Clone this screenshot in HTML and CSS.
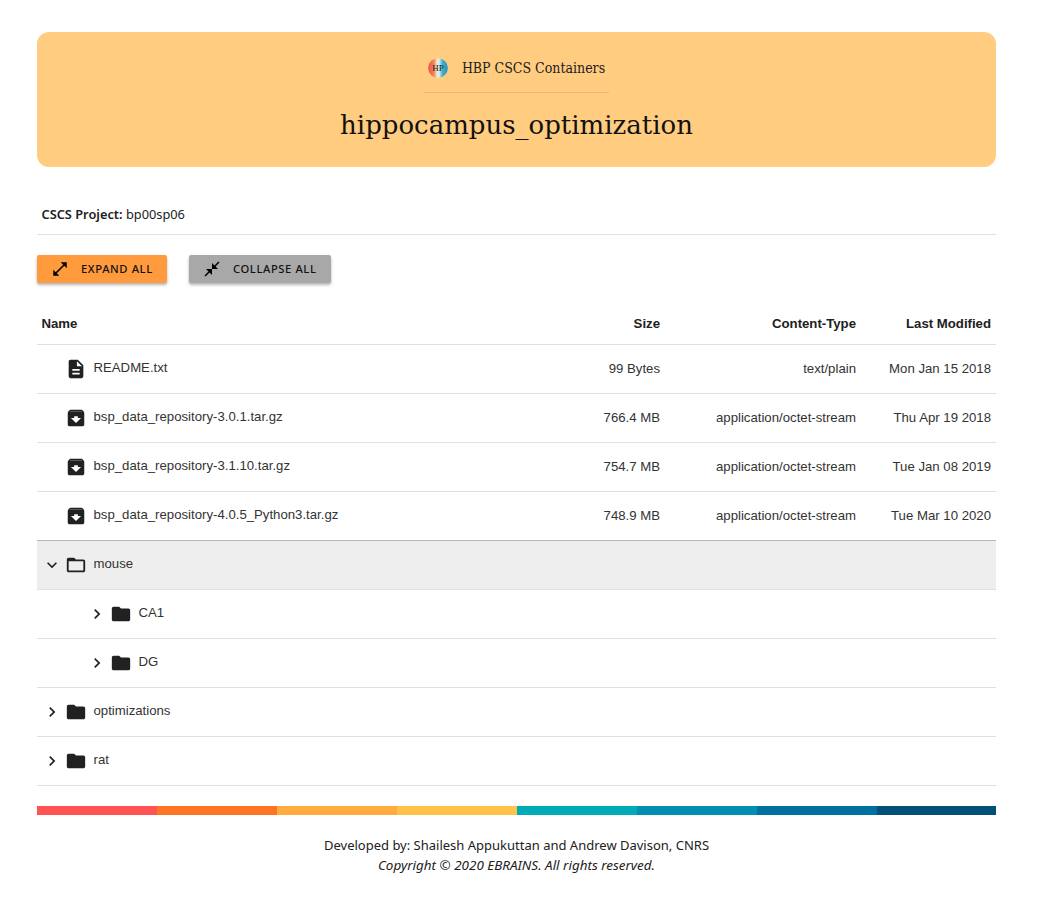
FILE: index.html
```html
<!DOCTYPE html>
<html lang="en">
<head>
<meta charset="utf-8">
<title>hippocampus_optimization</title>
<link rel="stylesheet" href="styles.css">
</head>
<body>
<main class="page">
  <header class="banner">
    <div class="brand">
      <svg class="logo" viewBox="0 0 20 20" aria-hidden="true">
        <defs>
          <linearGradient id="lg" x1="0" x2="1" y1="0" y2="0">
            <stop offset="0" stop-color="#ef4a52"/><stop offset=".3" stop-color="#f08a5a"/>
            <stop offset=".46" stop-color="#f5ead8"/><stop offset=".56" stop-color="#d8eef0"/>
            <stop offset=".72" stop-color="#40b4c8"/><stop offset="1" stop-color="#2b8cc0"/>
          </linearGradient>
        </defs>
        <circle cx="10" cy="10" r="9.8" fill="url(#lg)"/>
        <text x="10" y="13" text-anchor="middle" class="logo-text">HP</text>
      </svg>
      <span class="brand-name">HBP CSCS Containers</span>
    </div>
    <h1 class="title">hippocampus_optimization</h1>
  </header>

  <p class="project"><b>CSCS Project:</b> bp00sp06</p>

  <div class="actions">
    <button class="btn btn-expand">
      <svg class="btn-icon" viewBox="0 0 24 24"><path d="M21 11V3h-8l3.29 3.29-10 10L3 13v8h8l-3.29-3.29 10-10z"/></svg>
      <span>Expand all</span>
    </button>
    <button class="btn btn-collapse">
      <svg class="btn-icon" viewBox="0 0 24 24"><path d="M22 3.41l-5.29 5.29L20 12h-8V4l3.29 3.29L20.59 2 22 3.41zM3.41 22l5.29-5.29L12 20v-8H4l3.29 3.29L2 20.59 3.41 22z"/></svg>
      <span>Collapse all</span>
    </button>
  </div>

  <table class="listing">
    <colgroup><col><col class="col-size"><col class="col-type"><col class="col-date"></colgroup>
    <thead>
      <tr><th class="left">Name</th><th>Size</th><th>Content-Type</th><th class="last">Last Modified</th></tr>
    </thead>
    <tbody>
      <tr>
        <td><div class="entry lvl0"><span class="toggle"></span><svg class="ico" viewBox="0 0 24 24"><path d="M14 2H6c-1.1 0-1.99.9-1.99 2L4 20c0 1.1.89 2 1.99 2H18c1.1 0 2-.9 2-2V8l-6-6zm2 16H8v-2h8v2zm0-4H8v-2h8v2zm-3-5V3.5L18.5 9H13z"/></svg><span class="label">README.txt</span></div></td>
        <td>99 Bytes</td><td>text/plain</td><td class="last">Mon Jan 15 2018</td>
      </tr>
      <tr>
        <td><div class="entry lvl0"><span class="toggle"></span><svg class="ico" viewBox="0 0 24 24"><path d="M20.54 5.23l-1.39-1.68C18.88 3.21 18.47 3 18 3H6c-.47 0-.88.21-1.16.55L3.46 5.23C3.17 5.57 3 6.02 3 6.5V19c0 1.1.9 2 2 2h14c1.1 0 2-.9 2-2V6.5c0-.48-.17-.93-.46-1.27zM12 17.5L6.5 12H10v-2h4v2h3.5L12 17.5zM5.12 5l.4-.5h12.9l.45.5H5.12z"/></svg><span class="label">bsp_data_repository-3.0.1.tar.gz</span></div></td>
        <td>766.4 MB</td><td>application/octet-stream</td><td class="last">Thu Apr 19 2018</td>
      </tr>
      <tr>
        <td><div class="entry lvl0"><span class="toggle"></span><svg class="ico" viewBox="0 0 24 24"><path d="M20.54 5.23l-1.39-1.68C18.88 3.21 18.47 3 18 3H6c-.47 0-.88.21-1.16.55L3.46 5.23C3.17 5.57 3 6.02 3 6.5V19c0 1.1.9 2 2 2h14c1.1 0 2-.9 2-2V6.5c0-.48-.17-.93-.46-1.27zM12 17.5L6.5 12H10v-2h4v2h3.5L12 17.5zM5.12 5l.4-.5h12.9l.45.5H5.12z"/></svg><span class="label">bsp_data_repository-3.1.10.tar.gz</span></div></td>
        <td>754.7 MB</td><td>application/octet-stream</td><td class="last">Tue Jan 08 2019</td>
      </tr>
      <tr class="pre-open">
        <td><div class="entry lvl0"><span class="toggle"></span><svg class="ico" viewBox="0 0 24 24"><path d="M20.54 5.23l-1.39-1.68C18.88 3.21 18.47 3 18 3H6c-.47 0-.88.21-1.16.55L3.46 5.23C3.17 5.57 3 6.02 3 6.5V19c0 1.1.9 2 2 2h14c1.1 0 2-.9 2-2V6.5c0-.48-.17-.93-.46-1.27zM12 17.5L6.5 12H10v-2h4v2h3.5L12 17.5zM5.12 5l.4-.5h12.9l.45.5H5.12z"/></svg><span class="label">bsp_data_repository-4.0.5_Python3.tar.gz</span></div></td>
        <td>748.9 MB</td><td>application/octet-stream</td><td class="last">Tue Mar 10 2020</td>
      </tr>
      <tr class="open">
        <td colspan="4"><div class="entry lvl0"><svg class="toggle" viewBox="0 0 24 24"><path d="M16.59 8.59L12 13.17 7.41 8.59 6 10l6 6 6-6z"/></svg><svg class="ico" viewBox="0 0 24 24"><path d="M20 6h-8l-2-2H4c-1.1 0-1.99.9-1.99 2L2 18c0 1.1.9 2 2 2h16c1.1 0 2-.9 2-2V8c0-1.1-.9-2-2-2zm0 12H4V8h16v10z"/></svg><span class="label">mouse</span></div></td>
      </tr>
      <tr>
        <td colspan="4"><div class="entry lvl1"><svg class="toggle" viewBox="0 0 24 24"><path d="M10 6L8.59 7.41 13.17 12l-4.58 4.59L10 18l6-6z"/></svg><svg class="ico" viewBox="0 0 24 24"><path d="M10 4H4c-1.1 0-1.99.9-1.99 2L2 18c0 1.1.9 2 2 2h16c1.1 0 2-.9 2-2V8c0-1.1-.9-2-2-2h-8l-2-2z"/></svg><span class="label">CA1</span></div></td>
      </tr>
      <tr>
        <td colspan="4"><div class="entry lvl1"><svg class="toggle" viewBox="0 0 24 24"><path d="M10 6L8.59 7.41 13.17 12l-4.58 4.59L10 18l6-6z"/></svg><svg class="ico" viewBox="0 0 24 24"><path d="M10 4H4c-1.1 0-1.99.9-1.99 2L2 18c0 1.1.9 2 2 2h16c1.1 0 2-.9 2-2V8c0-1.1-.9-2-2-2h-8l-2-2z"/></svg><span class="label">DG</span></div></td>
      </tr>
      <tr>
        <td colspan="4"><div class="entry lvl0"><svg class="toggle" viewBox="0 0 24 24"><path d="M10 6L8.59 7.41 13.17 12l-4.58 4.59L10 18l6-6z"/></svg><svg class="ico" viewBox="0 0 24 24"><path d="M10 4H4c-1.1 0-1.99.9-1.99 2L2 18c0 1.1.9 2 2 2h16c1.1 0 2-.9 2-2V8c0-1.1-.9-2-2-2h-8l-2-2z"/></svg><span class="label">optimizations</span></div></td>
      </tr>
      <tr>
        <td colspan="4"><div class="entry lvl0"><svg class="toggle" viewBox="0 0 24 24"><path d="M10 6L8.59 7.41 13.17 12l-4.58 4.59L10 18l6-6z"/></svg><svg class="ico" viewBox="0 0 24 24"><path d="M10 4H4c-1.1 0-1.99.9-1.99 2L2 18c0 1.1.9 2 2 2h16c1.1 0 2-.9 2-2V8c0-1.1-.9-2-2-2h-8l-2-2z"/></svg><span class="label">rat</span></div></td>
      </tr>
    </tbody>
  </table>

  <div class="stripe">
    <span class="s1"></span><span class="s2"></span><span class="s3"></span><span class="s4"></span>
    <span class="s5"></span><span class="s6"></span><span class="s7"></span><span class="s8"></span>
  </div>

  <footer class="foot">
    <p>Developed by: Shailesh Appukuttan and Andrew Davison, CNRS</p>
    <p class="copy">Copyright © 2020 EBRAINS. All rights reserved.</p>
  </footer>
</main>
</body>
</html>
```

FILE: styles.css
```css
* { box-sizing: border-box; }
html, body { margin: 0; background: #fff; }
body { color: #212121; font-family: "Liberation Sans", Arial, sans-serif; }
.page { width: 959px; margin-left: 37px; padding-top: 32px; }

.banner {
  background: #ffcc80;
  border-radius: 12px;
  height: 135px;
  display: flex;
  flex-direction: column;
  align-items: center;
  padding-top: 24px;
}
.brand {
  display: flex;
  align-items: center;
  justify-content: center;
  gap: 14px;
  width: 185px;
  height: 37px;
  border-bottom: 1px solid #e9b87a;
  padding-bottom: 13px;
}
.logo { width: 20px; height: 20px; flex: none; }
.logo-text { font: 9px "Liberation Serif", serif; fill: #1a1a1a; }
.brand-name { font: 14px/20px "DejaVu Serif Condensed", "Liberation Serif", serif; color: #212121; white-space: nowrap; }
.title {
  margin: 14px 0 0;
  font: 400 26px/36px "DejaVu Serif", "Liberation Serif", serif;
  color: #111;
}

.project {
  margin: 0;
  height: 68px;
  padding: 39px 0 0 4.5px;
  font: 12.8px/16px "Noto Sans", sans-serif;
  border-bottom: 1px solid #e0e0e0;
}
.project b { font-weight: 600; }

.actions { display: flex; gap: 22px; padding-top: 20px; }
.btn {
  display: flex;
  align-items: center;
  height: 28px;
  border: 0;
  border-radius: 2px;
  padding: 0 0 0 13.5px;
  gap: 12.5px;
  color: #111;
  font: 500 11.2px/16px "Noto Sans", sans-serif;
  letter-spacing: .6px;
  text-transform: uppercase;
  box-shadow: 0 2px 3px rgba(0,0,0,.3);
}
.btn-expand { background: #ff9a3d; width: 130px; }
.btn-collapse { background: #a8a8a8; width: 142px; }
.btn-icon { width: 18px; height: 18px; fill: #000; flex: none; }

.listing {
  width: 100%;
  margin-top: 20px;
  border-collapse: collapse;
  table-layout: fixed;
  font-size: 13.2px;
}
.col-size { width: 140px; }
.col-type { width: 196px; }
.col-date { width: 140px; }
.listing th {
  height: 41px;
  padding: 0;
  text-align: right;
  font-weight: 700;
  border-bottom: 1px solid #e0e0e0;
}
.listing th.left { text-align: left; padding-left: 4.5px; }
.listing td {
  height: 49px;
  padding: 0;
  text-align: right;
  color: #333;
  border-bottom: 1px solid #e0e0e0;
}
.listing .last { padding-right: 5px; }
.listing tr.pre-open td { border-bottom-color: #b8b8b8; }
.listing tr.open td { background: #eee; }

.entry { display: flex; align-items: center; text-align: left; padding-left: 5px; }
.lvl1 { padding-left: 50px; }
.toggle { width: 20px; height: 20px; flex: none; fill: #212121; }
.ico { width: 22px; height: 22px; flex: none; margin-left: 3px; margin-right: 6.5px; fill: #212121; }
.label { position: relative; top: -1px; color: #333; }

.stripe { display: grid; grid-template-columns: repeat(7, 120px) 1fr; height: 9px; margin-top: 20px; }
.s1 { background: #ff5252; }
.s2 { background: #ff7324; }
.s3 { background: #ffab40; }
.s4 { background: #ffc24a; }
.s5 { background: #00abb8; }
.s6 { background: #008fb0; }
.s7 { background: #00719e; }
.s8 { background: #005077; }

.foot { text-align: center; padding-top: 20px; font: 13px/20px "Noto Sans", sans-serif; color: #212121; }
.foot p { margin: 0; }
.copy { font-style: italic; font-size: 13.45px; }
```
